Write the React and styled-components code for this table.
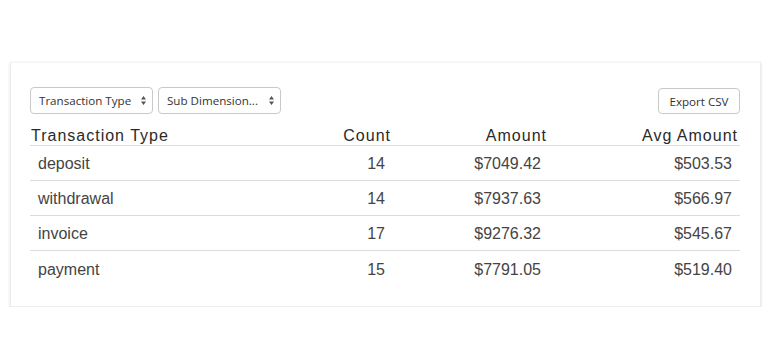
import React from 'react'
import styled, { createGlobalStyle } from 'styled-components'

const Global = createGlobalStyle`
  body {
    margin: 0;
    background: #fff;
    font-family: "Liberation Sans", Arial, sans-serif;
    color: #333;
  }
`

const Card = styled.div`
  box-sizing: border-box;
  width: 751px;
  margin: 62px 0 0 10px;
  padding: 24px 20px 20px 19px;
  background: #fff;
  border: 1px solid #ececec;
  border-top-color: #f3f3f3;
  box-shadow: 0 1px 3px rgba(0, 0, 0, 0.12);
`

const Toolbar = styled.div`
  display: flex;
  align-items: center;
  gap: 5px;
  height: 27px;
`

const Spacer = styled.div`
  flex: 1;
`

const SelectBox = styled.div`
  box-sizing: border-box;
  display: flex;
  align-items: center;
  justify-content: space-between;
  width: 123px;
  height: 27px;
  padding: 0 5px 0 8px;
  border: 1px solid #c9c9c9;
  border-radius: 4px;
  background: #fff;
  font-family: "Open Sans", "DejaVu Sans", sans-serif;
  font-size: 11.6px;
  color: #333;
`

const Button = styled.button`
  box-sizing: border-box;
  width: 82px;
  height: 26px;
  padding: 0;
  margin-top: 1px;
  border: 1px solid #c9c9c9;
  border-radius: 4px;
  background: #fff;
  font-family: "Open Sans", "DejaVu Sans", sans-serif;
  font-size: 11.6px;
  color: #333;
`

const Grid = styled.div`
  display: grid;
  grid-template-columns: 201px 162px 156px 191px;
`

const HeadRow = styled(Grid)`
  height: 32px;
  box-sizing: border-box;
  align-items: end;
  border-bottom: 1px solid #dcdcdc;
  font-size: 16px;
  letter-spacing: 1px;
  line-height: 18px;
  color: #2a2a2a;
`

const HeadCell = styled.div`
  text-align: ${({ $left }) => ($left ? 'left' : 'right')};
  padding: ${({ $left }) => ($left ? '0 0 0 1px' : '0 2px 0 0')};
`

const Row = styled(Grid)`
  height: 35px;
  padding-top: 2px;
  align-items: center;
  border-bottom: ${({ $last }) => ($last ? 'none' : '1px solid #dcdcdc')};
  box-sizing: border-box;
  font-size: 16px;
  color: #444;
`

const Cell = styled.div`
  text-align: ${({ $left }) => ($left ? 'left' : 'right')};
  padding: ${({ $left }) => ($left ? '0 0 0 8px' : '0 8px 0 0')};
`

const Arrows = () => (
  <svg width="7" height="11" viewBox="0 0 7 11">
    <path d="M3.5 1 L6 4.5 H1 Z M3.5 10 L6 6.5 H1 Z" fill="#555" />
  </svg>
)

const Select = ({ label }) => (
  <SelectBox>
    <span>{label}</span>
    <Arrows />
  </SelectBox>
)

const rows = [
  ['deposit', 14, '$7049.42', '$503.53'],
  ['withdrawal', 14, '$7937.63', '$566.97'],
  ['invoice', 17, '$9276.32', '$545.67'],
  ['payment', 15, '$7791.05', '$519.40'],
]

export default function App() {
  return (
    <>
      <Global />
      <Card>
        <Toolbar>
          <Select label="Transaction Type" />
          <Select label="Sub Dimension..." />
          <Spacer />
          <Button>Export CSV</Button>
        </Toolbar>
        <HeadRow>
          <HeadCell $left>Transaction Type</HeadCell>
          <HeadCell>Count</HeadCell>
          <HeadCell>Amount</HeadCell>
          <HeadCell>Avg Amount</HeadCell>
        </HeadRow>
        {rows.map((r, i) => (
          <Row key={r[0]} $last={i === rows.length - 1}>
            <Cell $left>{r[0]}</Cell>
            <Cell>{r[1]}</Cell>
            <Cell>{r[2]}</Cell>
            <Cell>{r[3]}</Cell>
          </Row>
        ))}
      </Card>
    </>
  )
}
